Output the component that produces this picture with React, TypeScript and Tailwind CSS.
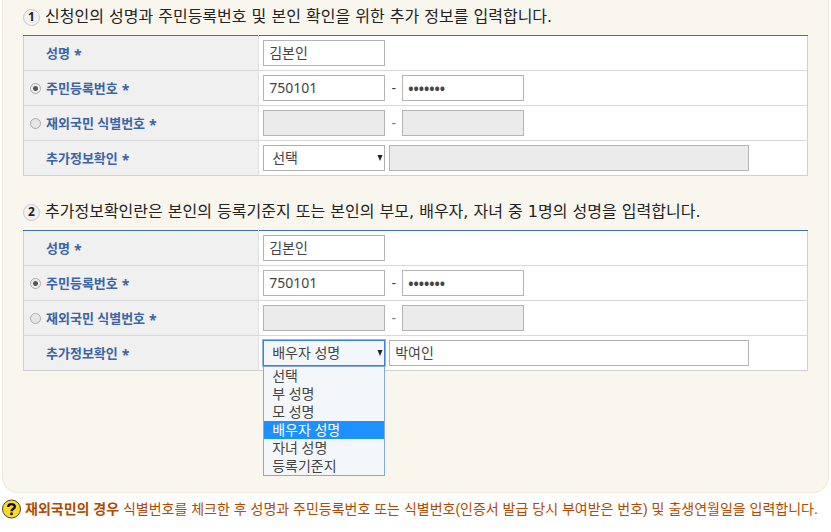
import React, { useState } from "react";
import clsx from "clsx";

const RELATION_OPTIONS = [
  "선택",
  "부 성명",
  "모 성명",
  "배우자 성명",
  "자녀 성명",
  "등록기준지",
];

const App: React.FC = () => {
  return (
    <main className="bg-white px-[2px] pb-3 font-['Noto_Sans','Noto_Sans_CJK_KR',sans-serif] text-sm text-[#444]">
      <div className="rounded-b-2xl border border-t-0 border-[#f0e9d3] bg-[#f9f6ee] pt-[5px] pr-5 pb-[121px] pl-5">
        <ApplicantSection
          id="basic"
          step={1}
          title="신청인의 성명과 주민등록번호 및 본인 확인을 위한 추가 정보를 입력합니다."
          relation="선택"
        />
        <ApplicantSection
          id="extra"
          step={2}
          title="추가정보확인란은 본인의 등록기준지 또는 본인의 부모, 배우자, 자녀 중 1명의 성명을 입력합니다."
          relation="배우자 성명"
          relationName="박여인"
          defaultOpen
          className="mt-6"
        />
      </div>
      <p className="mt-[6px] flex items-center gap-[3px] leading-5 text-[#b04a00] font-['Liberation_Sans','Noto_Sans_CJK_KR',sans-serif]">
        <HelpIcon />
        <span>
          <strong className="font-bold">재외국민의 경우</strong> 식별번호를
          체크한 후 성명과 주민등록번호 또는 식별번호(인증서 발급 당시 부여받은
          번호) 및 출생연월일을 입력합니다.
        </span>
      </p>
    </main>
  );
};

interface ApplicantSectionProps {
  id: string;
  step: number;
  title: string;
  relation: string;
  relationName?: string;
  defaultOpen?: boolean;
  className?: string;
}

const ApplicantSection: React.FC<ApplicantSectionProps> = (props) => {
  const { id } = props;
  const [idType, setIdType] = useState("resident");
  const [relation, setRelation] = useState(props.relation);
  const [open, setOpen] = useState(!!props.defaultOpen);
  const isResident = idType === "resident";

  const handleSelect = (option: string) => {
    setRelation(option);
    setOpen(false);
  };

  return (
    <section className={props.className}>
      <h2 className="mb-[6px] flex items-center gap-[5px] text-base leading-6 text-[#222] font-['DejaVu_Sans','Noto_Sans_CJK_KR',sans-serif]">
        <span className="flex size-[17px] shrink-0 items-center justify-center rounded-full border border-[#c8c8cc] bg-[#f1f1f1] text-xs font-bold font-['Noto_Sans',sans-serif]">
          {props.step}
        </span>
        {props.title}
      </h2>
      <table className="w-full border-collapse border border-[#d0d0d0] bg-white">
        <tbody>
          <tr className="border-t border-t-[#3f6fae]">
            <HeaderCell>
              <FieldLabel htmlFor={`${id}-name`} text="성명" />
            </HeaderCell>
            <FieldCell>
              <TextField id={`${id}-name`} defaultValue="김본인" />
            </FieldCell>
          </tr>
          <tr className="border-t border-[#d8d8d8]">
            <HeaderCell>
              <Radio
                id={`${id}-resident`}
                name={`${id}-type`}
                checked={isResident}
                onChange={() => setIdType("resident")}
              />
              <FieldLabel htmlFor={`${id}-resident`} text="주민등록번호" />
            </HeaderCell>
            <FieldCell>
              <TextField
                aria-label="주민등록번호 앞자리"
                defaultValue="750101"
                disabled={!isResident}
              />
              <span className="w-[17px] text-center">-</span>
              <TextField
                type="password"
                aria-label="주민등록번호 뒷자리"
                defaultValue="1234567"
                disabled={!isResident}
              />
            </FieldCell>
          </tr>
          <tr className="border-t border-[#d8d8d8]">
            <HeaderCell>
              <Radio
                id={`${id}-overseas`}
                name={`${id}-type`}
                checked={!isResident}
                onChange={() => setIdType("overseas")}
              />
              <FieldLabel htmlFor={`${id}-overseas`} text="재외국민 식별번호" />
            </HeaderCell>
            <FieldCell>
              <TextField
                aria-label="식별번호 앞자리"
                disabled={isResident}
              />
              <span className="w-[17px] text-center text-[#777]">-</span>
              <TextField
                type="password"
                aria-label="식별번호 뒷자리"
                disabled={isResident}
              />
            </FieldCell>
          </tr>
          <tr className="border-t border-[#d8d8d8]">
            <HeaderCell>
              <FieldLabel htmlFor={`${id}-relation`} text="추가정보확인" />
            </HeaderCell>
            <FieldCell>
              <div className="relative mr-1 w-[122px] shrink-0">
                <select
                  id={`${id}-relation`}
                  value={relation}
                  onChange={(e) => handleSelect(e.target.value)}
                  className={clsx(
                    "block h-[26px] w-full appearance-none border pr-4 pl-2 outline-none",
                    open
                      ? "border-[#3d7fe0] bg-[#f3f7fa] ring-1 ring-[#8fb6ee]"
                      : "border-[#b0b0b0] bg-white",
                  )}
                >
                  {RELATION_OPTIONS.map((option) => (
                    <option key={option}>{option}</option>
                  ))}
                </select>
                <svg
                  viewBox="0 0 6 6"
                  className="pointer-events-none absolute top-[10px] right-[2px] size-[6px] fill-[#222]"
                >
                  <path d="M0.5 0h5L3 6z" />
                </svg>
                {open && (
                  <div
                    role="listbox"
                    aria-label="추가정보확인"
                    className="absolute inset-x-0 top-full z-10 border border-[#86a9d8] bg-[#f3f7fa]"
                  >
                    {RELATION_OPTIONS.map((option) => (
                      <button
                        key={option}
                        type="button"
                        role="option"
                        aria-selected={option === relation}
                        onClick={() => handleSelect(option)}
                        className={clsx(
                          "block h-[18px] w-full pl-2 text-left leading-[18px]",
                          option === relation && "bg-[#1e90ff] text-white",
                        )}
                      >
                        {option}
                      </button>
                    ))}
                  </div>
                )}
              </div>
              <TextField
                wide
                aria-label="추가정보"
                defaultValue={props.relationName}
                disabled={relation === "선택"}
              />
            </FieldCell>
          </tr>
        </tbody>
      </table>
    </section>
  );
};

const HeaderCell: React.FC<{ children: React.ReactNode }> = (props) => {
  return (
    <th
      scope="row"
      className="w-[30%] border-r border-[#e0e0e0] bg-[#f0f0f0] p-0 text-left"
    >
      <div className="relative flex items-center pl-[22px]">
        {props.children}
      </div>
    </th>
  );
};

const FieldCell: React.FC<{ children: React.ReactNode }> = (props) => {
  return (
    <td className="p-0">
      <div className="flex items-center px-1 py-1">{props.children}</div>
    </td>
  );
};

const FieldLabel: React.FC<{ htmlFor: string; text: string }> = (props) => {
  return (
    <label
      htmlFor={props.htmlFor}
      className="flex items-center gap-1 text-[13px] leading-5 font-bold text-[#3a64a4]"
    >
      {props.text}
      <span className="pt-1 text-sm leading-5">*</span>
    </label>
  );
};

const Radio: React.FC<React.InputHTMLAttributes<HTMLInputElement>> = (
  props,
) => {
  return (
    <input
      type="radio"
      className="absolute left-[6px] size-[11px] appearance-none rounded-full border border-[#aaa] bg-[#e6e6e6] checked:bg-[radial-gradient(circle,#555_0_2px,#eee_3px)]"
      {...props}
    />
  );
};

interface TextFieldProps extends React.InputHTMLAttributes<HTMLInputElement> {
  wide?: boolean;
}

const TextField: React.FC<TextFieldProps> = ({ wide, ...props }) => {
  return (
    <input
      type="text"
      className={clsx(
        "h-[26px] border border-[#b4b4b4] bg-white px-[5px] outline-none disabled:bg-[#ebebeb]",
        wide ? "w-[360px] min-w-0" : "w-[122px] shrink-0",
        props.type === "password" ? "font-bold" : "pb-[2px]",
      )}
      {...props}
    />
  );
};

const HelpIcon: React.FC = () => {
  return (
    <svg viewBox="0 0 20 20" className="size-5 shrink-0" aria-hidden="true">
      <circle cx="9.5" cy="10" r="9" fill="#ffd91f" stroke="#444" />
      <path
        d="M6.2 8.1C6.2 4.2 12.8 4.2 12.8 7.8c0 2.3-3.3 2.2-3.3 4.4"
        fill="none"
        stroke="#111"
        strokeWidth="2.4"
      />
      <circle cx="9.5" cy="14.8" r="1.5" fill="#111" />
    </svg>
  );
};

export default App;
